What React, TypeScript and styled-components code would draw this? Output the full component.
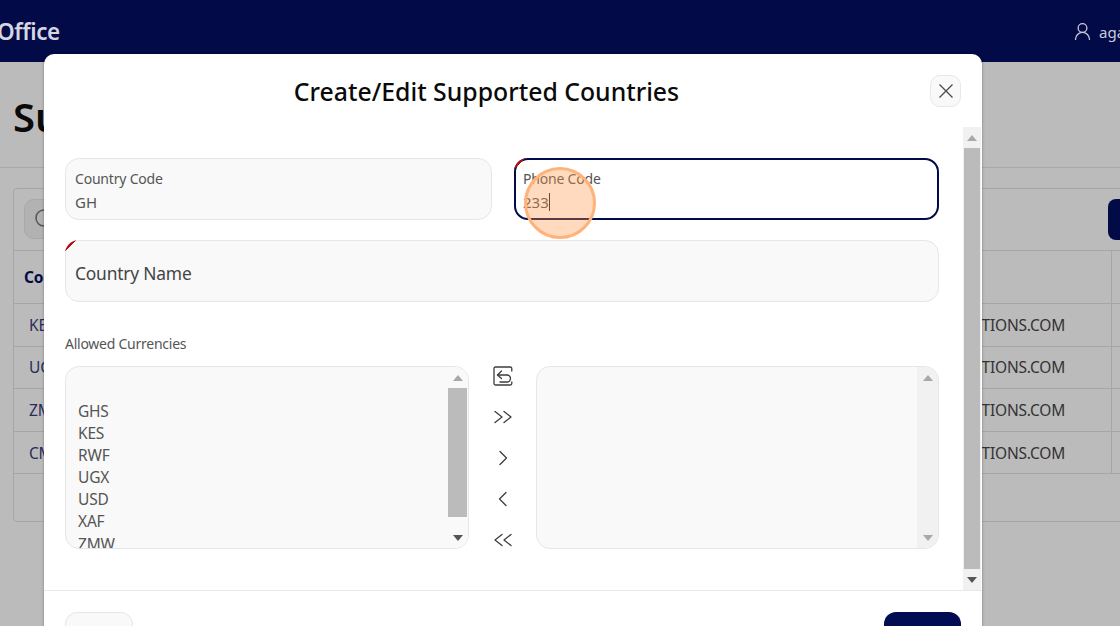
import styled, { createGlobalStyle } from "styled-components";
import { Search, UserRound } from "lucide-react";

const GlobalStyle = createGlobalStyle`
  html, body {
    margin: 0;
    padding: 0;
    height: 100%;
    overflow: hidden;
    font-family: "Noto Sans", "Open Sans", Arial, sans-serif;
  }
  * {
    box-sizing: border-box;
  }
`;

const navy = "#020a47";

// Page behind the dialog (already dimmed by the backdrop)
const AppContainer = styled.div`
  position: relative;
  width: 1120px;
  height: 626px;
  overflow: hidden;
  background: #bbbbbb;
`;

const TopBar = styled.header`
  height: 62px;
  padding-top: 1px;
  background: ${navy};
  display: flex;
  align-items: center;
  justify-content: space-between;
  overflow: hidden;
`;

const Brand = styled.div`
  margin-left: -3px;
  font-size: 22.5px;
  font-weight: 600;
  letter-spacing: -0.4px;
  color: #d5d6e0;
`;

const UserBox = styled.div`
  flex: 0 0 48px;
  display: flex;
  align-items: center;
  gap: 6px;
  font-size: 15px;
  white-space: nowrap;
  overflow: hidden;
  color: #c9cad8;

  svg {
    flex: none;
  }
`;

const PageHeading = styled.div`
  height: 106px;
  padding: 27px 13px 0;
  border-bottom: 1px solid #a8a8a8;
  font-size: 40px;
  line-height: 56px;
  font-weight: 600;
  color: #0a0a0a;
  white-space: nowrap;
`;

const TableCard = styled.div`
  margin: 20px 0 0 13px;
  width: 1200px;
  height: 334px;
  border: 1px solid #a6a6a6;
  border-radius: 4px;
`;

const TableToolbar = styled.div`
  height: 62px;
  padding: 10px 4px 0 10px;
  display: flex;
  justify-content: space-between;
  border-bottom: 1px solid #a6a6a6;
`;

const SearchBox = styled.div`
  width: 300px;
  height: 40px;
  border-radius: 10px;
  background: #b2b2b2;
  border: 1px solid #a8a8a8;
  padding: 7px 8px;
  display: flex;
  color: #555;
`;

const ToolbarButton = styled.div`
  width: 100px;
  height: 41px;
  background: ${navy};
  border-radius: 8px;
`;

const TableRow = styled.div<{ $head?: boolean }>`
  display: grid;
  grid-template-columns: 1098px 1fr;
  height: ${(p) => (p.$head ? "53px" : "42.6px")};
  border-bottom: 1px solid #a6a6a6;
  align-items: center;
  font-size: 15.5px;
  color: #333;
  font-weight: ${(p) => (p.$head ? 700 : 400)};
`;

const TableCell = styled.div`
  height: 100%;
  display: flex;
  align-items: center;
  justify-content: space-between;
  padding: 0 46px 0 10px;
  border-right: 1px solid #a6a6a6;
  letter-spacing: -0.2px;
`;

const CodeText = styled.span<{ $head?: boolean }>`
  color: ${(p) => (p.$head ? navy : "#2a2c5c")};
  padding-left: ${(p) => (p.$head ? 0 : "5px")};
`;

// Dialog
const Modal = styled.div`
  position: absolute;
  left: 44px;
  top: 54px;
  width: 938px;
  height: 640px;
  background: #fff;
  border-radius: 10px;
  box-shadow: 0 0 3px rgba(0, 0, 0, 0.35);
  display: flex;
  flex-direction: column;
`;

const ModalHeader = styled.div`
  height: 73px;
  flex: none;
  display: flex;
  align-items: flex-start;
  padding: 20px 21px 0 21px;
`;

const ModalTitle = styled.h2`
  flex: 1;
  margin: 0;
  padding-right: 22px;
  text-align: center;
  font-size: 24.8px;
  line-height: 34px;
  font-weight: 500;
  color: #0a0a0a;
`;

const CloseButton = styled.button`
  width: 31px;
  height: 32px;
  margin-top: 1px;
  padding: 0;
  border: 1px solid #e8e8e8;
  border-radius: 10px;
  background: #f9f9f9;
  color: #4a4a4a;
  display: flex;
  align-items: center;
  justify-content: center;
`;

const ModalBody = styled.div`
  height: 463px;
  flex: none;
  display: flex;
  justify-content: space-between;
  padding: 0 1px 0 21px;
`;

const FormArea = styled.div`
  width: 874px;
  padding-top: 31px;
  display: flex;
  flex-direction: column;
`;

const FieldRow = styled.div`
  display: grid;
  grid-template-columns: 427px 425px;
  gap: 22px;
  margin-bottom: 20px;
`;

const Field = styled.div<{ $focused?: boolean; $required?: boolean }>`
  position: relative;
  height: 62px;
  padding: ${(p) => (p.$focused ? "9px 7px" : "10px 9px")};
  border-radius: 14px;
  background: ${(p) => (p.$focused ? "#fff" : "#f9f9f9")};
  border: ${(p) => (p.$focused ? `2px solid ${navy}` : "1px solid #e6e6e6")};
  display: flex;
  flex-direction: column;

  /* red "required" wedge in the top left corner */
  &::before {
    content: "";
    display: ${(p) => (p.$required ? "block" : "none")};
    position: absolute;
    top: ${(p) => (p.$focused ? "-2px" : "-1px")};
    left: ${(p) => (p.$focused ? "-2px" : "-1px")};
    width: 14px;
    height: 14px;
    border-top-left-radius: 14px;
    background: linear-gradient(135deg, #b01010 42%, transparent 42%);
  }
`;

const FieldLabel = styled.span`
  font-size: 14px;
  line-height: 19px;
  color: #555;
  letter-spacing: -0.2px;
`;

const FieldValue = styled.span`
  margin-top: 4px;
  font-size: 15px;
  line-height: 20px;
  color: #555;
  display: flex;
  align-items: center;
`;

const Caret = styled.i`
  display: inline-block;
  width: 1px;
  height: 18px;
  background: #222;
`;

const BigLabel = styled.span`
  margin-top: 2px;
  font-size: 17.4px;
  line-height: 40px;
  color: #444;
  letter-spacing: -0.2px;
`;

const SectionLabel = styled.div`
  margin-top: 32px;
  margin-bottom: 12px;
  font-size: 14px;
  line-height: 20px;
  color: #555;
  letter-spacing: -0.25px;
`;

const Transfer = styled.div`
  display: grid;
  grid-template-columns: 404px 67px 403px;
`;

const ListBox = styled.div`
  height: 183px;
  display: flex;
  justify-content: space-between;
  background: #f9f9f9;
  border: 1px solid #e6e6e6;
  border-radius: 14px;
  overflow: hidden;
`;

const Options = styled.div`
  padding: 11px 12px 0;
  font-size: 15.5px;
  line-height: 22.1px;
  color: #555;
  letter-spacing: -0.2px;
`;

const BlankOption = styled.div`
  height: 22px;
`;

const MoveButtons = styled.div`
  margin-top: -11px;
  display: flex;
  flex-direction: column;
  align-items: center;
  color: #3c3c3c;
`;

const MoveButton = styled.div`
  height: 41px;
  flex: none;
  display: flex;
  align-items: center;
  justify-content: center;
`;

// Hand-drawn scrollbars, same look as the Windows ones in the shot
const ScrollTrack = styled.div<{ $width: number; $bg: string }>`
  flex: none;
  width: ${(p) => p.$width}px;
  height: 100%;
  background: ${(p) => p.$bg};
  display: flex;
  flex-direction: column;
  align-items: center;
`;

const ScrollEnd = styled.div`
  flex: none;
  width: 100%;
  height: 21px;
  display: flex;
  align-items: center;
  justify-content: center;
`;

const ScrollThumb = styled.div<{ $height: number }>`
  flex: none;
  width: calc(100% - 2px);
  height: ${(p) => p.$height}px;
  background: #bbbbbb;
`;

const ScrollSpacer = styled.div`
  flex: 1;
`;

const Arrow = styled.span<{ $down?: boolean; $dark?: boolean }>`
  width: 0;
  height: 0;
  border-left: 5px solid transparent;
  border-right: 5px solid transparent;
  ${(p) => (p.$down ? "border-top" : "border-bottom")}: 6px solid ${(p) => (p.$dark ? "#555" : "#a8a8a8")};
`;

const ModalFooter = styled.div`
  flex: none;
  border-top: 1px solid #e8e8e8;
  padding: 21px 21px 0;
  display: flex;
  justify-content: space-between;
`;

const CancelButton = styled.button`
  width: 68px;
  height: 44px;
  border: 1px solid #e6e6e6;
  border-radius: 12px;
  background: #f9f9f9;
  font: inherit;
  font-size: 15px;
  color: #333;
`;

const SaveButton = styled.button`
  width: 77px;
  height: 44px;
  border: none;
  border-radius: 12px;
  background: #020c52;
  font: inherit;
  font-size: 15px;
  color: #fff;
`;

// Orange click marker from the screen recording
const ClickMarker = styled.div`
  position: absolute;
  left: 524px;
  top: 167px;
  width: 72px;
  height: 72px;
  border-radius: 50%;
  background: rgba(255, 150, 70, 0.35);
  border: 3px solid #ffb27a;
`;

const chevron = (d: string) => (
  <svg width="20" height="16" viewBox="0 0 20 16" fill="none" stroke="currentColor" strokeWidth="1.3" strokeLinecap="round" strokeLinejoin="round">
    <path d={d} />
  </svg>
);

const countries = ["KE", "UG", "ZM", "CM"];
const currencies = ["GHS", "KES", "RWF", "UGX", "USD", "XAF", "ZMW"];

function ListScrollbar({ withThumb }: { withThumb?: boolean }) {
  return (
    <ScrollTrack $width={21} $bg={withThumb ? "#f9f9f9" : "#f1f1f1"}>
      <ScrollEnd>
        <Arrow />
      </ScrollEnd>
      {withThumb ? <ScrollThumb $height={129} /> : null}
      <ScrollSpacer />
      <ScrollEnd>
        <Arrow $down $dark={withThumb} />
      </ScrollEnd>
    </ScrollTrack>
  );
}

function App() {
  return (
    <AppContainer>
      <GlobalStyle />
      <TopBar>
        <Brand>Office</Brand>
        <UserBox>
          <UserRound size={21} strokeWidth={1.5} />
          agatha
        </UserBox>
      </TopBar>
      <PageHeading>Supported Countries</PageHeading>
      <TableCard>
        <TableToolbar>
          <SearchBox>
            <Search size={24} strokeWidth={1.5} />
          </SearchBox>
          <ToolbarButton />
        </TableToolbar>
        <TableRow $head>
          <TableCell>
            <CodeText $head>Code</CodeText>
          </TableCell>
          <div />
        </TableRow>
        {countries.map((code) => (
          <TableRow key={code}>
            <TableCell>
              <CodeText>{code}</CodeText>
              SUPPORT@SOLUTIONS.COM
            </TableCell>
            <div />
          </TableRow>
        ))}
      </TableCard>

      <Modal>
        <ModalHeader>
          <ModalTitle>Create/Edit Supported Countries</ModalTitle>
          <CloseButton aria-label="Close">
            <svg width="16" height="16" viewBox="0 0 16 16" stroke="currentColor" strokeWidth="1.3" fill="none">
              <path d="M1.5 1.5l13 13M14.5 1.5l-13 13" />
            </svg>
          </CloseButton>
        </ModalHeader>

        <ModalBody>
          <FormArea>
            <FieldRow>
              <Field>
                <FieldLabel>Country Code</FieldLabel>
                <FieldValue>GH</FieldValue>
              </Field>
              <Field $focused $required>
                <FieldLabel>Phone Code</FieldLabel>
                <FieldValue>
                  233
                  <Caret />
                </FieldValue>
              </Field>
            </FieldRow>
            <Field $required>
              <BigLabel>Country Name</BigLabel>
            </Field>
            <SectionLabel>Allowed Currencies</SectionLabel>
            <Transfer>
              <ListBox>
                <Options>
                  <BlankOption />
                  {currencies.map((c) => (
                    <div key={c}>{c}</div>
                  ))}
                </Options>
                <ListScrollbar withThumb />
              </ListBox>
              <MoveButtons>
                <MoveButton>
                  <svg width="20" height="20" viewBox="0 0 20 20" fill="none" stroke="currentColor" strokeWidth="1.3" strokeLinecap="round" strokeLinejoin="round">
                    <path d="M18.8 5V2.5A1.5 1.5 0 0 0 17.3 1H2.5A1.5 1.5 0 0 0 1 2.5v15A1.5 1.5 0 0 0 2.5 19h14.8a1.5 1.5 0 0 0 1.5-1.5V16" />
                    <path d="M8.5 5L4.5 9l4 3.5" />
                    <path d="M4.5 9h9.5a3.3 3.3 0 0 1 0 7H7" />
                  </svg>
                </MoveButton>
                <MoveButton>{chevron("M2 2.5L9 8l-7 5.5M11 2.5l7 5.5-7 5.5")}</MoveButton>
                <MoveButton>{chevron("M7 1.5l6.5 6.5L7 14.5")}</MoveButton>
                <MoveButton>{chevron("M13 1.5L6.5 8l6.5 6.5")}</MoveButton>
                <MoveButton>{chevron("M9 2.5L2 8l7 5.5M18 2.5L11 8l7 5.5")}</MoveButton>
              </MoveButtons>
              <ListBox>
                <Options />
                <ListScrollbar />
              </ListBox>
            </Transfer>
          </FormArea>
          <ScrollTrack $width={18} $bg="#f1f1f1">
            <ScrollEnd>
              <Arrow />
            </ScrollEnd>
            <ScrollThumb $height={421} />
            <ScrollSpacer />
            <ScrollEnd>
              <Arrow $down $dark />
            </ScrollEnd>
          </ScrollTrack>
        </ModalBody>

        <ModalFooter>
          <CancelButton>Close</CancelButton>
          <SaveButton>Save</SaveButton>
        </ModalFooter>
      </Modal>

      <ClickMarker />
    </AppContainer>
  );
}

export default App;
